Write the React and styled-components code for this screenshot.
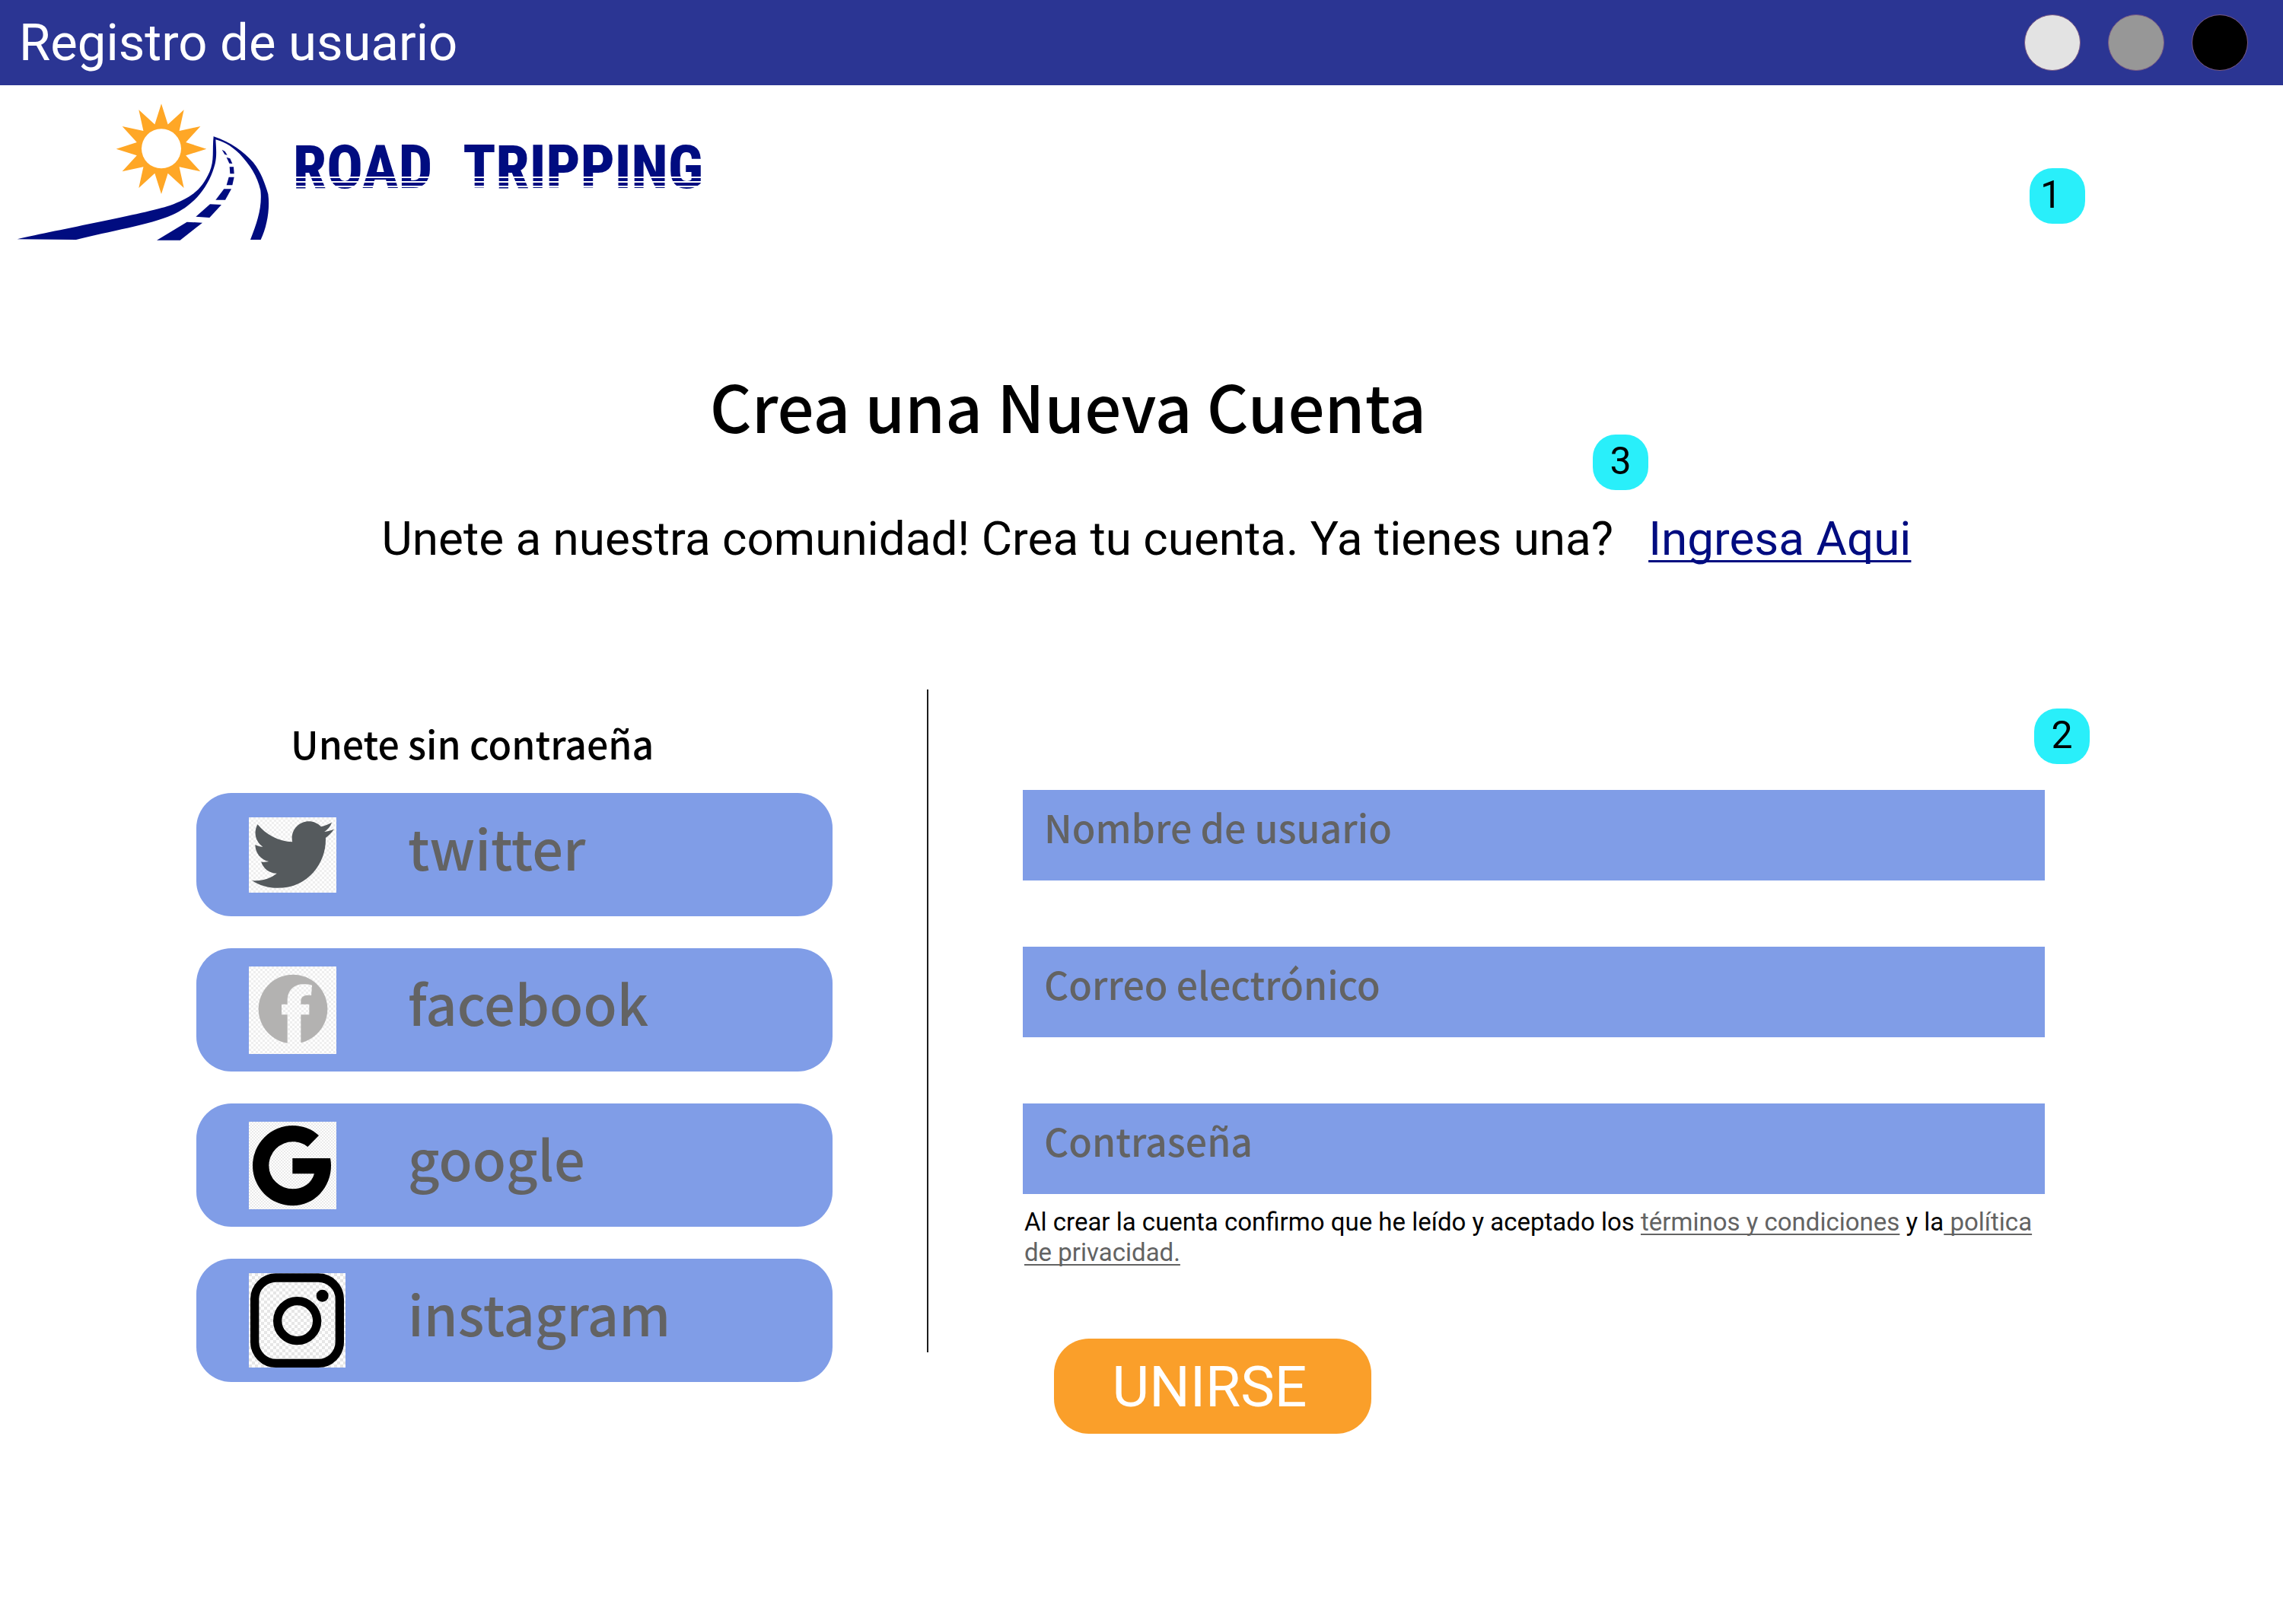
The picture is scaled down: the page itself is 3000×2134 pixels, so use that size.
import React from "react";
import styled, { createGlobalStyle, css } from "styled-components";
import { FaTwitter } from "react-icons/fa";

const GlobalStyle = createGlobalStyle`
  *, *::before, *::after { box-sizing: border-box; }
  body {
    margin: 0;
    background: #fff;
    color: #000;
    font-family: Roboto, sans-serif;
  }
`;

const display = css`
  font-family: "Noto Sans CJK SC", "Open Sans", sans-serif;
  font-weight: 500;
`;

const TitleBar = styled.header`
  display: flex;
  align-items: center;
  justify-content: space-between;
  min-height: 112px;
  padding: 0 46px 0 25px;
  background: #2b3593;
  color: #fff;
`;

const WindowTitle = styled.span`
  font-size: 67px;
  line-height: 80px;
`;

const WindowControls = styled.div`
  display: flex;
  gap: 36px;
`;

const WindowDot = styled.button`
  width: 74px;
  height: 74px;
  padding: 0;
  border: 1px solid #7a5a86;
  border-radius: 50%;
  background: ${(p) => p.$color};
`;

const Brand = styled.div`
  position: relative;
  display: flex;
  align-items: flex-start;
  gap: 28px;
  padding: 23px 20px 0;
`;

const Emblem = styled.svg`
  flex: none;
  width: 337px;
  height: 183px;
`;

const Wordmark = styled.div`
  position: relative;
  display: flex;
  gap: 40px;
  margin-top: 30px;
  color: #000c80;
  font-family: "Roboto Condensed", "Liberation Sans Narrow", "Liberation Sans", sans-serif;
  font-size: 79px;
  font-weight: 800;
  line-height: 110px;

  &::after {
    content: "";
    position: absolute;
    left: 0;
    right: 0;
    bottom: 25px;
    height: 18px;
    background: repeating-linear-gradient(#fff 0 2px, transparent 2px 6px);
  }
`;

const Badge = styled.span`
  position: absolute;
  top: ${(p) => p.$top};
  left: ${(p) => p.$left || "auto"};
  right: ${(p) => p.$right || "auto"};
  display: flex;
  align-items: center;
  justify-content: ${(p) => (p.$start ? "flex-start" : "center")};
  width: 73px;
  height: 73px;
  padding: 0 14px 4px;
  border-radius: 30px;
  background: #29effa;
  color: #000;
  font-size: 50px;
  line-height: 60px;
`;

const Main = styled.main`
  padding: 156px 313px 0 258px;
`;

const Heading = styled.h1`
  ${display}
  margin: 0;
  padding-right: 138px;
  font-size: 85px;
  line-height: 116px;
  text-align: center;
`;

const Intro = styled.p`
  display: flex;
  justify-content: center;
  gap: 46px;
  margin: 81px 0 0;
  padding-left: 68px;
  font-size: 62px;
  line-height: 74px;
`;

const SignIn = styled.span`
  position: relative;
`;

const SignInLink = styled.a`
  color: #000c80;
  text-decoration: underline;
  text-decoration-skip-ink: none;
  text-decoration-thickness: 3px;
  text-underline-offset: 7px;
`;

const Columns = styled.div`
  display: grid;
  grid-template-columns: 836fr 250px 1343fr;
  margin-top: 161px;
`;

const Social = styled.section`
  padding-top: 36px;
`;

const SocialTitle = styled.h2`
  ${display}
  margin: 0 0 32px;
  padding-left: 124px;
  font-size: 50px;
  line-height: 68px;
`;

const SocialList = styled.div`
  display: grid;
  gap: 42px;
`;

const SocialButton = styled.button`
  ${display}
  display: grid;
  grid-template-columns: 209px 1fr;
  align-items: center;
  height: 162px;
  padding: 0 69px;
  border: 0;
  border-radius: 46px;
  background: #809de7;
  color: #636363;
  font-size: 72px;
  line-height: 98px;
  text-align: left;
`;

const SocialName = styled.span`
  padding-bottom: 20px;
`;

const Tile = styled.span`
  display: flex;
  align-items: center;
  justify-content: center;
  width: ${(p) => p.$w}px;
  height: ${(p) => p.$h}px;
  color: ${(p) => p.$ink};
  background: repeating-conic-gradient(#fefefe 0 25%, ${(p) => p.$shade} 0 50%) 0 0 /
    ${(p) => p.$cell}px ${(p) => p.$cell}px;

  svg { display: block; }
`;

const Divider = styled.div`
  justify-self: center;
  width: 2px;
  margin-bottom: 107px;
  background: #1c1c1c;
`;

const Form = styled.form`
  position: relative;
  padding-top: 132px;
`;

const Fields = styled.div`
  display: grid;
  gap: 87px;
`;

const Field = styled.input`
  ${display}
  width: 100%;
  height: 119px;
  padding: 0 28px 24px;
  border: 0;
  border-radius: 0;
  outline: 0;
  background: #809de7;
  color: #636363;
  font-size: 50px;

  &::placeholder {
    color: #636363;
    opacity: 1;
  }
`;

const Terms = styled.p`
  margin: 17px 0 0;
  padding-left: 2px;
  font-size: 33px;
  line-height: 40px;
`;

const TermsLink = styled.a`
  color: #636363;
  text-decoration: underline;
  text-decoration-skip-ink: none;
  text-decoration-thickness: 2px;
  text-underline-offset: 4px;
`;

const Submit = styled.button`
  display: block;
  width: 417px;
  height: 125px;
  margin: 93px 0 0 41px;
  padding: 0 8px 0 0;
  border: 0;
  border-radius: 46px;
  background: #fa9f2a;
  color: #fff;
  font-family: Roboto, sans-serif;
  font-size: 75px;
  line-height: 90px;
`;

const sunPoints = Array.from({ length: 24 }, (_, i) => {
  const r = i % 2 ? 100 : 178;
  const a = (i * Math.PI) / 12;
  return `${(606 + r * Math.cos(a)).toFixed(1)},${(212 + r * Math.sin(a)).toFixed(1)}`;
}).join(" ");

function RoadEmblem() {
  return (
    <Emblem viewBox="30 30 1011 549" aria-hidden="true">
      <polygon points={sunPoints} fill="#ffa726" />
      <circle cx="606" cy="211" r="78" fill="#fff" />
      <g fill="#000c80">
        <path d="M812 163C806 215 816 258 796 303C764 375 722 405 640 435C540 468 200 530 38 568L270 570C400 537 560 512 650 472C752 425 800 342 818 270C826 235 821 200 820 172Z" />
        <path d="M812 163C880 185 930 222 968 265C1000 305 1015 350 1027 390C1035 450 1022 520 998 570L957 570C985 500 1004 440 997 375C985 320 955 275 915 232C880 197 845 180 816 174Z" />
        <polygon points="845,215 857,222 866,236 856,234" />
        <polygon points="863,245 877,250 886,270 874,269" />
        <polygon points="875,283 891,283 893,310 877,310" />
        <polygon points="872,323 893,323 886,355 863,355" />
        <polygon points="853,370 882,370 858,413 820,413" />
        <polygon points="798,430 843,432 796,483 742,479" />
        <polygon points="707,500 768,503 680,572 588,572" />
      </g>
    </Emblem>
  );
}

function FacebookMark() {
  return (
    <svg width="115" height="115" viewBox="0 0 345 345" aria-hidden="true">
      <mask id="facebook-f">
        <rect width="345" height="345" fill="#fff" />
        <path
          fill="#000"
          d="M152 320V190H129V149H152V136C152 93 178 70 216 70C230 70 240 71 249 74L246 114C218 111 205 118 205 139V149H238V190H205V320Z"
        />
      </mask>
      <circle cx="174" cy="168" r="136" fill="currentColor" mask="url(#facebook-f)" />
    </svg>
  );
}

function GoogleMark() {
  return (
    <svg width="115" height="115" viewBox="0 0 345 345" aria-hidden="true">
      <path
        fill="currentColor"
        d="M276 54C250 30 214 15 173 15A158 158 0 0 0 173 331A151 158 0 0 0 324 173Q324 158 321 144H172V205H258C247 243 215 265 173 265A94 92 0 0 1 79 173A94 94 0 0 1 173 79C196 79 216 86 232 99Z"
      />
    </svg>
  );
}

function InstagramMark() {
  return (
    <svg width="127" height="124" viewBox="0 0 381 372" aria-hidden="true">
      <g fill="none" stroke="currentColor" strokeWidth="34">
        <rect x="23" y="18" width="335" height="337" rx="84" />
        <circle cx="191" cy="188" r="78" />
      </g>
      <circle cx="290" cy="89" r="24" fill="currentColor" />
    </svg>
  );
}

const networks = [
  { name: "twitter", w: 115, h: 99, ink: "#555a5d", cell: 6, shade: "#efefef", mark: <FaTwitter size={108} /> },
  { name: "facebook", w: 115, h: 115, ink: "#b3b2b1", cell: 6, shade: "#efefef", mark: <FacebookMark /> },
  { name: "google", w: 115, h: 115, ink: "#000", cell: 4, shade: "#ebebeb", mark: <GoogleMark /> },
  { name: "instagram", w: 127, h: 124, ink: "#000", cell: 8, shade: "#e6e6e6", mark: <InstagramMark /> },
];

export default function App() {
  return (
    <>
      <GlobalStyle />
      <TitleBar>
        <WindowTitle>Registro de usuario</WindowTitle>
        <WindowControls>
          <WindowDot type="button" $color="#e3e3e3" aria-label="Minimizar" />
          <WindowDot type="button" $color="#979797" aria-label="Maximizar" />
          <WindowDot type="button" $color="#000" aria-label="Cerrar" />
        </WindowControls>
      </TitleBar>

      <Brand>
        <RoadEmblem />
        <Wordmark>
          <span>ROAD</span>
          <span>TRIPPING</span>
        </Wordmark>
        <Badge $top="109px" $right="260px" $start>1</Badge>
      </Brand>

      <Main>
        <Heading>Crea una Nueva Cuenta</Heading>
        <Intro>
          <span>Unete a nuestra comunidad! Crea tu cuenta. Ya tienes una?</span>
          <SignIn>
            <SignInLink href="#ingresa">Ingresa Aqui</SignInLink>
            <Badge $top="-100px" $left="-73px">3</Badge>
          </SignIn>
        </Intro>

        <Columns>
          <Social>
            <SocialTitle>Unete sin contraeña</SocialTitle>
            <SocialList>
              {networks.map((n) => (
                <SocialButton key={n.name} type="button">
                  <Tile $w={n.w} $h={n.h} $ink={n.ink} $cell={n.cell} $shade={n.shade}>
                    {n.mark}
                  </Tile>
                  <SocialName>{n.name}</SocialName>
                </SocialButton>
              ))}
            </SocialList>
          </Social>

          <Divider />

          <Form onSubmit={(e) => e.preventDefault()}>
            <Badge $top="25px" $right="-59px">2</Badge>
            <Fields>
              <Field type="text" placeholder="Nombre de usuario" aria-label="Nombre de usuario" />
              <Field type="email" placeholder="Correo electrónico" aria-label="Correo electrónico" />
              <Field type="password" placeholder="Contraseña" aria-label="Contraseña" />
            </Fields>
            <Terms>
              <span>Al crear la cuenta confirmo que he leído y aceptado los </span>
              <TermsLink href="#terminos">términos y condiciones</TermsLink>
              <span> y la</span>
              <TermsLink href="#privacidad">
                <span> política </span>
                <span>de privacidad.</span>
              </TermsLink>
            </Terms>
            <Submit type="submit">UNIRSE</Submit>
          </Form>
        </Columns>
      </Main>
    </>
  );
}
